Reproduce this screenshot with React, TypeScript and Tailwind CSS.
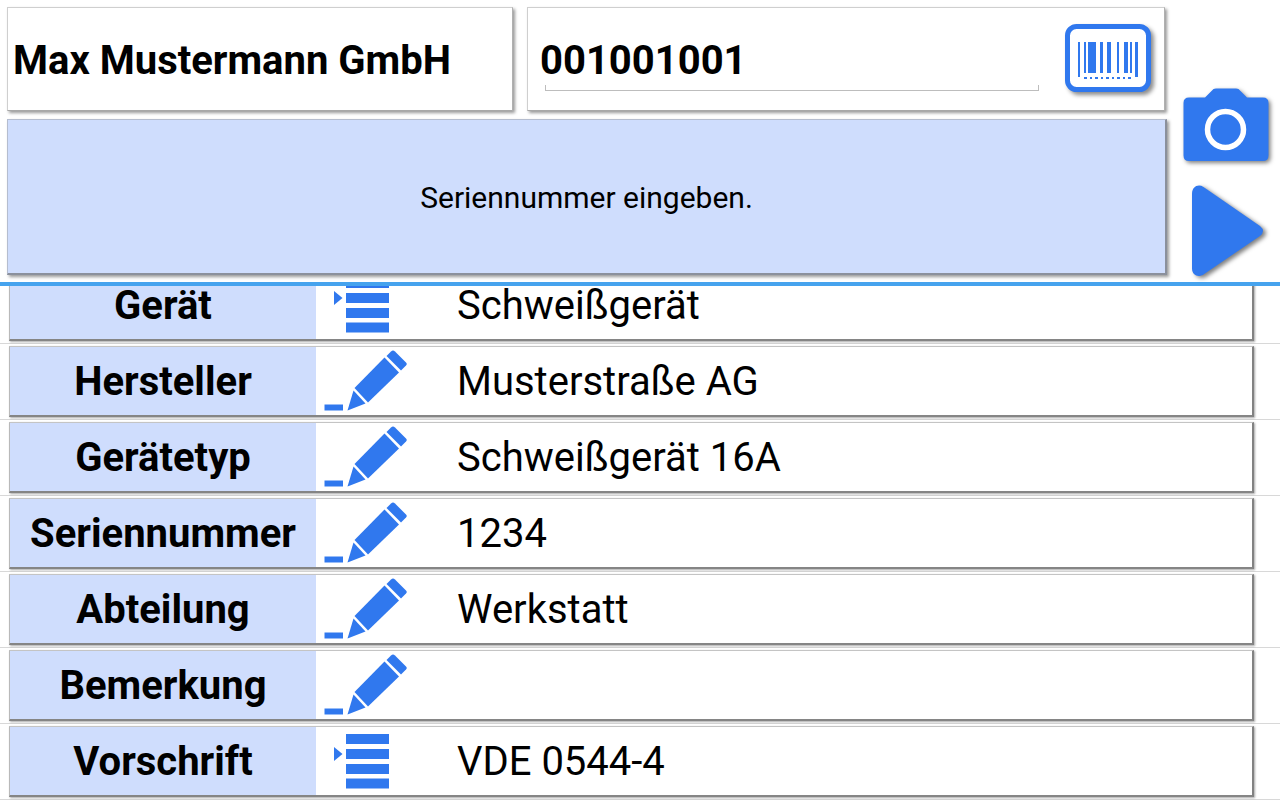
import { useLayoutEffect, useRef, useState } from "react";

type FieldKind = "list" | "text";

interface Field {
    id: string;
    label: string;
    value: string;
    kind: FieldKind;
}

const fields: Field[] = [
    { id: "geraet", label: "Gerät", value: "Schweißgerät", kind: "list" },
    { id: "hersteller", label: "Hersteller", value: "Musterstraße AG", kind: "text" },
    { id: "geraetetyp", label: "Gerätetyp", value: "Schweißgerät 16A", kind: "text" },
    { id: "seriennummer", label: "Seriennummer", value: "1234", kind: "text" },
    { id: "abteilung", label: "Abteilung", value: "Werkstatt", kind: "text" },
    { id: "bemerkung", label: "Bemerkung", value: "", kind: "text" },
    { id: "vorschrift", label: "Vorschrift", value: "VDE 0544-4", kind: "list" },
];

function BarcodeIcon() {
    return (
        <svg width="86" height="68" viewBox="0 0 86 68" fill="#3078ee" className="drop-shadow-[3px_3px_2px_rgba(0,0,0,0.45)]">
            <rect x="2.5" y="2.5" width="81" height="63" rx="9" fill="#fff" stroke="#3078ee" strokeWidth="5" />
            <path d="M13 18h2v35h-2zM19 18h2v31h-2zM23 18h8v31h-8zM35 18h3v31h-3zM42 18h4v31h-4zM52 18h2v31h-2zM59 18h4v31h-4zM65 18h2v31h-2zM70 18h3v35h-3z" />
            <path d="M19 53h3v2h-3zM25 53h2v2h-2zM30 53h3v2h-3zM36 53h2v2h-2zM41 53h3v2h-3zM47 53h2v2h-2zM52 53h3v2h-3zM58 53h2v2h-2zM63 53h3v2h-3z" />
        </svg>
    );
}

function CameraIcon() {
    return (
        <svg width="86" height="73" viewBox="0 0 86 73" className="drop-shadow-[2px_2px_2px_rgba(0,0,0,0.5)]">
            <path
                fill="#3078ee"
                d="M6 9.500H22L30.500 1Q31.500 0.500 33 0.500H53Q54.500 0.500 55.500 1L64 9.500H80Q85.500 9.500 85.500 15V67.500Q85.500 73 80 73H6Q0.500 73 0.500 67.500V15Q0.500 9.500 6 9.500Z"
            />
            <circle cx="42.500" cy="41.500" r="18" fill="none" stroke="#fff" strokeWidth="5.500" />
        </svg>
    );
}

function PlayIcon() {
    return (
        <svg width="72" height="92" viewBox="0 0 72 92" className="drop-shadow-[3px_2px_2px_rgba(0,0,0,0.5)]">
            <path
                fill="#3078ee"
                d="M0 8.500C0 2 6-1.500 11.500 2L68 41Q74 46 68 51L11.500 89.500C6 93 0 90 0 83.500Z"
            />
        </svg>
    );
}

function PencilIcon() {
    return (
        <svg width="83" height="62" viewBox="0 0 83 62" fill="#3078ee">
            <path d="M0.500 54.500h18.500v6h-18.500z" />
            <path d="M67 1.500Q69-0.500 71 1.500L82 12.500Q83.500 14 82 15.500L77 20.500L62.500 6Z" />
            <path d="M60.500 7.500L75 22.500L44 52.500L30.500 38Z" />
            <path d="M29.500 40.500L41.500 53.500L23.500 60.500Z" />
        </svg>
    );
}

function ListIcon() {
    return (
        <svg width="56" height="56" viewBox="0 0 56 56" fill="#3078ee">
            <path d="M13 1h43v10H13zM13 16h43v10H13zM13 31h43v10H13zM13 45.500h43v10H13z" />
            <path d="M1 14L9.500 21L1 28Z" />
        </svg>
    );
}

function FieldRow({ field }: { field: Field }) {
    return (
        <li className="h-19 border-b border-[#d8d8d8] py-0.5 pr-[26px] pl-[9px]">
            <div className="flex h-full items-stretch border-t border-r-2 border-b-2 border-l border-t-[#c4c4c4] border-r-[#828282] border-b-[#858585] border-l-[#b9b9b9] bg-white shadow-[1px_1px_2px_rgba(0,0,0,0.35)]">
                <div className="flex w-[306px] shrink-0 items-center justify-center bg-[#cfddfd] pt-0.5 font-bold">
                    {field.label}
                </div>
                <button
                    type="button"
                    aria-label={`${field.label} bearbeiten`}
                    className={field.kind === "list" ? "flex w-[141px] shrink-0 items-center pl-[17px]" : "flex w-[141px] shrink-0 items-center pl-2"}
                >
                    {field.kind === "list" ? <ListIcon /> : <PencilIcon />}
                </button>
                <div className="flex min-w-0 flex-1 items-center pt-0.5">{field.value}</div>
            </div>
        </li>
    );
}

export default function App() {
    const [number, setNumber] = useState("001001001");
    const listRef = useRef<HTMLUListElement>(null);

    // start with the last field in view
    useLayoutEffect(() => {
        if (listRef.current) {
            listRef.current.scrollTop = listRef.current.scrollHeight;
        }
    }, []);

    return (
        <div className="flex h-screen flex-col bg-white font-[Roboto,sans-serif] text-[40px] leading-12 text-black">
            <header className="flex shrink-0 border-b-4 border-[#46a3ee] py-[7px] pl-[7px]">
                <div className="flex min-w-0 flex-1 flex-col gap-2">
                    <div className="flex h-26 gap-3.5 pr-0.5">
                        <h1 className="flex w-[506px] shrink-0 items-center border border-[#cfcfcf] border-r-[#b0b0b0] border-b-[#a8a8a8] pt-[3px] pl-[5px] font-bold shadow-[2px_2px_3px_rgba(0,0,0,0.4)]">
                            Max Mustermann GmbH
                        </h1>
                        <div className="flex min-w-0 flex-1 items-center justify-between border border-[#cfcfcf] border-r-[#b0b0b0] border-b-[#a8a8a8] px-[13px] pl-3 shadow-[2px_2px_3px_rgba(0,0,0,0.4)]">
                            <div className="mr-[26px] min-w-0 flex-1 pt-1.5">
                                <input
                                    aria-label="Nummer"
                                    value={number}
                                    onChange={(e) => setNumber(e.target.value)}
                                    className="block h-13 w-full pt-0.5 font-bold outline-none"
                                />
                                <div className="ml-[5px] h-1.5 border-x border-b border-[#bdbdbd]" />
                            </div>
                            <button type="button" aria-label="Barcode scannen" className="pb-[3px]">
                                <BarcodeIcon />
                            </button>
                        </div>
                    </div>
                    <p className="flex h-[156px] items-center justify-center border border-r-2 border-b-2 border-[#b5bdcf] border-r-[#8b909c] border-b-[#8b909c] bg-[#cfddfd] pt-0.5 text-[30px] shadow-[2px_2px_3px_rgba(0,0,0,0.4)]">
                        Seriennummer eingeben.
                    </p>
                </div>
                <div className="flex w-[113px] shrink-0 flex-col items-center justify-end gap-6 pl-1">
                    <button type="button" aria-label="Foto aufnehmen">
                        <CameraIcon />
                    </button>
                    <button type="button" aria-label="Weiter" className="-mb-0.5 pl-1">
                        <PlayIcon />
                    </button>
                </div>
            </header>
            <ul ref={listRef} className="min-h-0 flex-1 overflow-y-auto [scrollbar-width:none]">
                {fields.map((field) => (
                    <FieldRow key={field.id} field={field} />
                ))}
            </ul>
        </div>
    );
}
